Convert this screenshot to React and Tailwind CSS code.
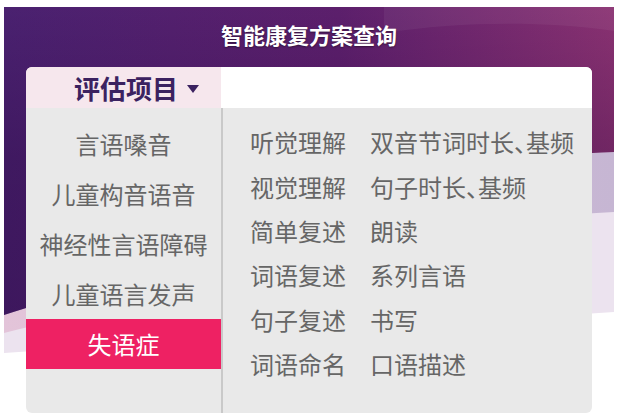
const categories = ['言语嗓音', '儿童构音语音', '神经性言语障碍', '儿童语言发声', '失语症'];

const tasks = [
  ['听觉理解', '双音节词时长、基频'],
  ['视觉理解', '句子时长、基频'],
  ['简单复述', '朗读'],
  ['词语复述', '系列言语'],
  ['句子复述', '书写'],
  ['词语命名', '口语描述'],
];

function Backdrop() {
  return (
    <svg className="absolute left-0 top-0" width="610" height="346" viewBox="0 0 610 346">
      <defs>
        <linearGradient id="purple" x1="0" y1="0" x2="1" y2="0">
          <stop offset="0" stopColor="#4a2170" />
          <stop offset="0.55" stopColor="#5c1f6c" />
          <stop offset="1" stopColor="#8a3272" />
        </linearGradient>
        <linearGradient id="shade" x1="0" y1="0" x2="0" y2="1">
          <stop offset="0" stopColor="#1e0032" stopOpacity="0" />
          <stop offset="0.5" stopColor="#1e0032" stopOpacity="0.25" />
          <stop offset="1" stopColor="#1e0032" stopOpacity="0.3" />
        </linearGradient>
        <linearGradient id="band" x1="0" y1="0" x2="1" y2="0">
          <stop offset="0" stopColor="#e3c4d9" />
          <stop offset="1" stopColor="#c6b6d3" />
        </linearGradient>
      </defs>
      <path d="M0 0 H610 V305 L0 346 Z" fill="#ece3ef" />
      <path d="M0 0 H610 V205 C400 215 150 290 0 326 Z" fill="url(#band)" />
      <path d="M0 0 H610 V145 C400 150 150 262 0 308 Z" fill="url(#purple)" />
      <path d="M0 0 H610 V145 C400 150 150 262 0 308 Z" fill="url(#shade)" />
      <path d="M380 26 C460 14 540 14 610 24 V0 H380 Z" fill="#ffffff" fillOpacity="0.05" />
    </svg>
  );
}

export default function App() {
  return (
    <div
      className="w-[618px] h-[420px] bg-white pt-[7px] px-[4px] overflow-hidden"
      style={{ fontFamily: '"Noto Sans CJK SC", "Noto Sans", sans-serif' }}
    >
      <div className="relative w-[610px]">
        <Backdrop />
        <div className="relative">
          <div className="h-[55px] flex items-center justify-center text-white font-bold text-[22px] [text-shadow:0_1px_2px_rgba(0,0,0,0.45)]">
            智能康复方案查询
          </div>

          <div className="mt-[5px] ml-[22px] w-[566px] h-[346px] rounded-[6px] overflow-hidden bg-[#e9e9e9] flex flex-col">
            {/* Header */}
            <div className="h-[41px] flex shrink-0">
              <div className="w-[195px] bg-[#f6e7ed] flex items-center pl-[48px] gap-[9px] text-[#3b2260]">
                <span className="font-bold text-[26px] leading-none">评估项目</span>
                <svg width="12" height="8" viewBox="0 0 12 8" className="mt-[3px]">
                  <path d="M0 0 H12 L6 8 Z" fill="#3b2260" />
                </svg>
              </div>
              <div className="flex-1 bg-white" />
            </div>

            {/* Body */}
            <div className="flex flex-1">
              <div className="w-[195px] pt-[11px] flex flex-col">
                {categories.map((c, i) => {
                  const active = i === categories.length - 1;
                  return (
                    <div
                      key={c}
                      className={`h-[50px] flex items-center justify-center text-[24px] ${
                        active ? 'bg-[#ee2163] text-white' : 'text-[#666666]'
                      }`}
                    >
                      {c}
                    </div>
                  );
                })}
              </div>
              <div className="flex-1 border-l-2 border-[#c9c9c9] pl-[27px] pt-[12px]">
                {tasks.map(([a, b]) => (
                  <div key={a} className="h-[44.4px] flex items-center text-[24px] text-[#666666]">
                    <span className="w-[120px]">{a}</span>
                    <span className="[font-feature-settings:'halt']">{b}</span>
                  </div>
                ))}
              </div>
            </div>
          </div>
        </div>
      </div>
    </div>
  );
}
